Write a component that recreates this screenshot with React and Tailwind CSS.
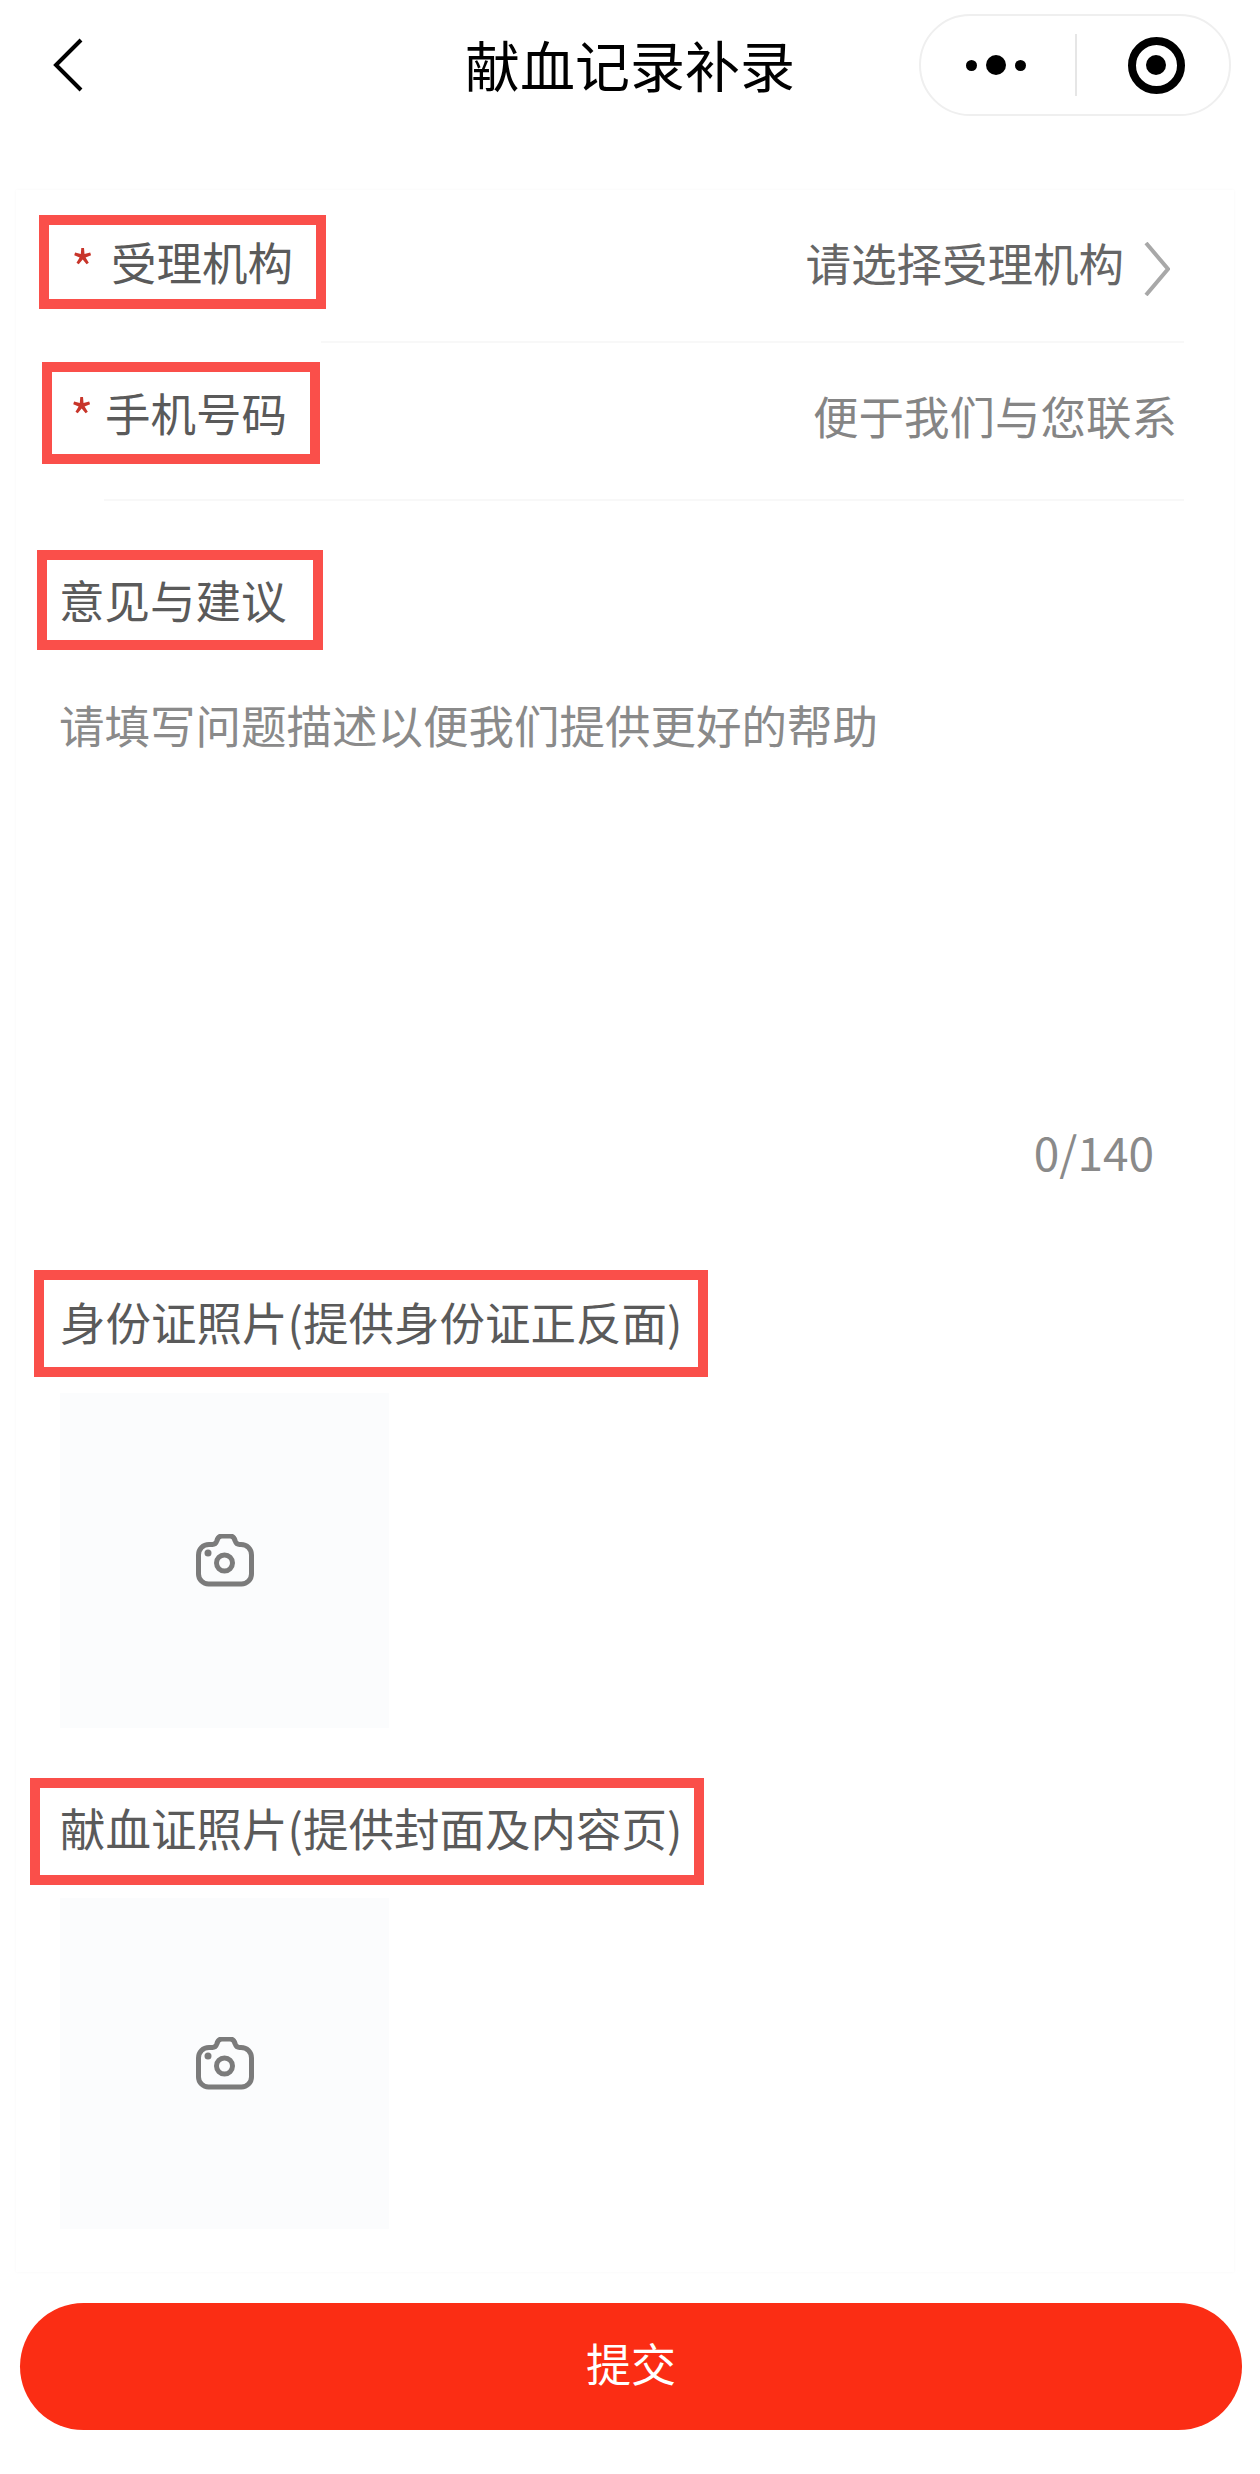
const CameraIcon = () => (
  <svg width="58" height="53" viewBox="0 0 58 53" fill="none" stroke="#7b7b7b" strokeWidth="5">
    <path d="M13 10.5h3.5c2.2 0 3.5-1.2 4.3-3.5.8-3 2.2-5 5-5h8.4c2.8 0 4.2 2 5 5 .8 2.3 2.1 3.5 4.3 3.5H45c6 0 10.5 4.5 10.5 10.5v19c0 5.5-4.5 10-10 10h-33c-5.5 0-10-4.5-10-10V21c0-6 4.5-10.5 10.5-10.5z" />
    <circle cx="28.5" cy="29" r="8" />
    <circle cx="12" cy="19" r="3.5" fill="#7b7b7b" stroke="none" />
  </svg>
);

const Header = () => (
  <div className="h-[130px] grid grid-cols-[1fr_auto_1fr] items-center">
    <div className="pl-[52px]">
      <svg width="32" height="54" viewBox="0 0 32 54" fill="none" stroke="#000" strokeWidth="4">
        <path d="M29 2 4 27l25 25" />
      </svg>
    </div>
    <div className="text-[55px] leading-none text-black pb-[4px]">献血记录补录</div>
    <div className="flex justify-end pr-[29px]">
      <div className="w-[312px] h-[102px] rounded-[51px] border-2 border-[#efefef] flex items-center">
        <div className="w-[154px] pr-[4px] flex items-center justify-center gap-[9px]">
          <span className="w-[11px] h-[11px] rounded-full bg-black"></span>
          <span className="w-[20px] h-[20px] rounded-full bg-black"></span>
          <span className="w-[11px] h-[11px] rounded-full bg-black"></span>
        </div>
        <div className="w-[2px] h-[62px] bg-[#e6e6e6]"></div>
        <div className="flex-1 flex items-center justify-center pl-[6px]">
          <span className="w-[57px] h-[57px] rounded-full border-[8px] border-black flex items-center justify-center">
            <span className="w-[20px] h-[20px] rounded-full bg-black"></span>
          </span>
        </div>
      </div>
    </div>
  </div>
);

const Star = ({ className }) => (
  <span className={`w-[24px] flex-none text-[#c8352a] text-[50px] leading-none ${className}`}>*</span>
);

const PhotoBox = ({ className }) => (
  <div className={`bg-[#fbfcfd] flex items-center justify-center ${className}`}>
    <CameraIcon />
  </div>
);

export default function App() {
  return (
    <div className="w-[1260px] h-[2474px] bg-white overflow-hidden [font-family:'Noto_Sans_CJK_SC','Noto_Sans',sans-serif]">
      <Header />

      <div className="mt-[60px] ml-[16px] mr-[26px] h-[2082px] shadow-[0_0_3px_#f7f7f7] text-[#5a5a5a] text-[45.5px]">
        <div className="h-[151px] flex justify-between pl-[23px] pr-[64px]">
          <div className="mt-[25px] w-[287px] h-[94px] border-[10px] border-[#fa4f4a] flex items-center pl-[22px] gap-[16px]">
            <Star className="mt-[8px]" />
            <span className="leading-none">受理机构</span>
          </div>
          <div className="mt-[52px] h-[54px] flex items-center gap-[20px] text-[#666666]">
            <span className="leading-none -mt-[12px]">请选择受理机构</span>
            <svg width="26" height="54" viewBox="0 0 26 54" fill="none" stroke="#a8a8a8" strokeWidth="4">
              <path d="m2 1 22 26L2 53" />
            </svg>
          </div>
        </div>
        <div className="h-[2px] ml-[305px] mr-[50px] bg-[#f8f8f8]"></div>

        <div className="h-[156px] flex justify-between pl-[26px] pr-[57px]">
          <div className="mt-[19px] w-[278px] h-[102px] border-[10px] border-[#fa4f4a] flex items-center pl-[18px] gap-[11px]">
            <Star className="mt-[4px]" />
            <span className="leading-none">手机号码</span>
          </div>
          <span className="mt-[50px] leading-none text-[#858585]">便于我们与您联系</span>
        </div>
        <div className="h-[2px] ml-[88px] mr-[50px] bg-[#f8f8f8]"></div>

        <div className="mt-[49px] ml-[21px] w-[286px] h-[100px] border-[10px] border-[#fa4f4a] flex items-center pl-[12px]">
          <span className="leading-none">意见与建议</span>
        </div>

        <div className="mt-[44px] ml-[43px] leading-[60px] text-[#8a8a8a]">请填写问题描述以便我们提供更好的帮助</div>
        <div className="mt-[367px] mr-[80px] leading-[60px] text-right text-[46px] text-[#8a8a8a]">0/140</div>

        <div className="mt-[89px] ml-[18px] w-[674px] h-[107px] border-[10px] border-[#fa4f4a] flex items-center pl-[16px] pb-[4px]">
          <span className="leading-none whitespace-nowrap">身份证照片(提供身份证正反面)</span>
        </div>
        <PhotoBox className="mt-[16px] ml-[44px] w-[329px] h-[335px]" />

        <div className="mt-[50px] ml-[14px] w-[674px] h-[107px] border-[10px] border-[#fa4f4a] flex items-center pl-[20px] pb-[8px]">
          <span className="leading-none whitespace-nowrap">献血证照片(提供封面及内容页)</span>
        </div>
        <PhotoBox className="mt-[13px] ml-[44px] w-[329px] h-[331px]" />
      </div>

      <div className="mt-[31px] ml-[20px] mr-[18px] h-[127px] rounded-[64px] bg-[#fb2d14] flex items-center justify-center pb-[8px] text-white text-[45px]">
        提交
      </div>
    </div>
  );
}
